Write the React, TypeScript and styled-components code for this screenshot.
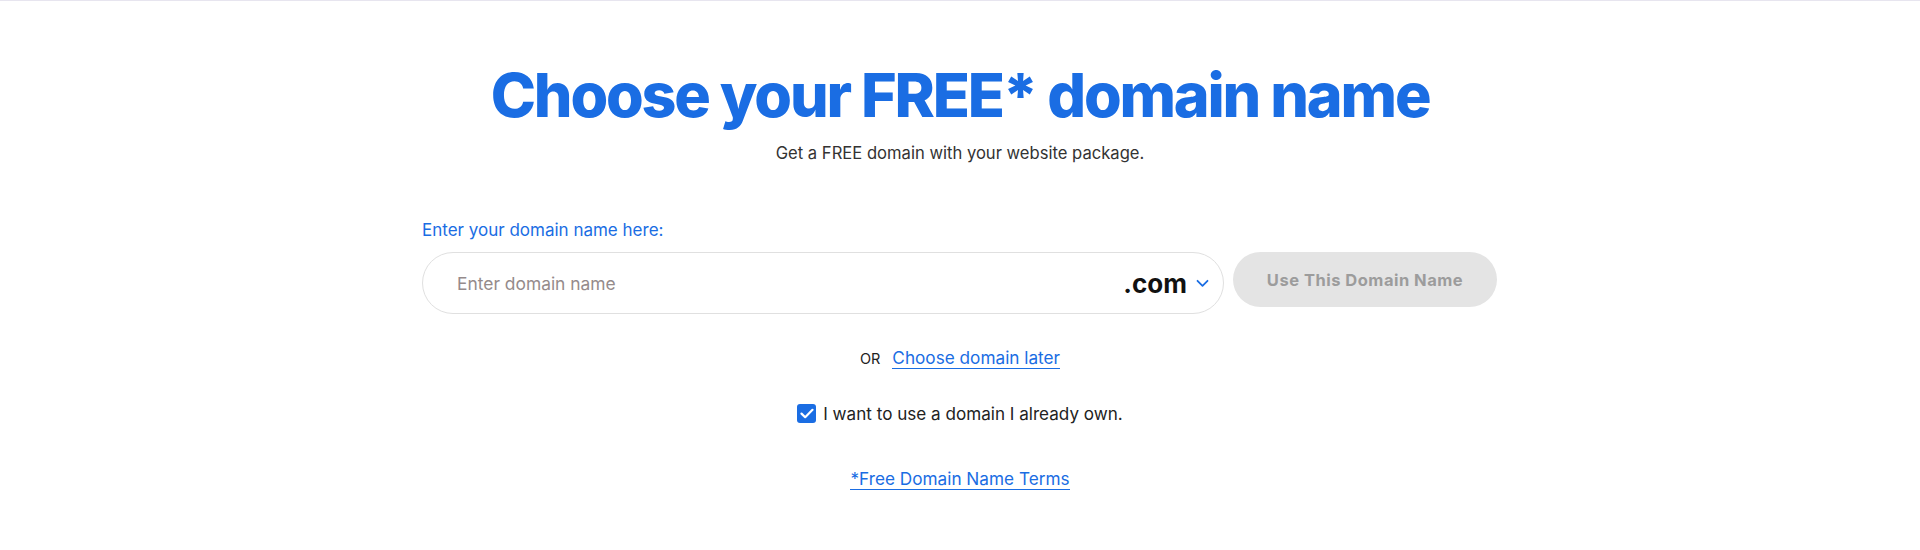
import styled, { createGlobalStyle } from "styled-components";

const GlobalStyle = createGlobalStyle`
  body {
    margin: 0;
    background: #ffffff;
    font-family: Inter, "Noto Sans", sans-serif;
    color: #222;
  }
`;

const blue = "#1a6de3";

const Page = styled.main`
  border-top: 1px solid #e7e5ef;
  display: flex;
  flex-direction: column;
  align-items: center;
  padding-top: 54px;
`;

const Title = styled.h1`
  margin: 0;
  font-size: 61px;
  font-weight: 800;
  letter-spacing: -2.2px;
  line-height: 80px;
  color: ${blue};
`;

const Subtitle = styled.p`
  margin: 8px 0 0;
  font-size: 16.6px;
  color: #333;
`;

const Form = styled.section`
  width: 1076px;
  margin-top: 57px;
`;

const Label = styled.label`
  display: block;
  font-size: 17px;
  color: ${blue};
  margin-bottom: 12px;
`;

const Row = styled.div`
  display: flex;
  align-items: flex-start;
  gap: 9px;
`;

const InputBox = styled.div`
  flex: 0 0 802px;
  box-sizing: border-box;
  height: 62px;
  border: 1px solid #e0e0e0;
  border-radius: 31px;
  display: flex;
  align-items: center;
  padding: 0 14px 0 32px;
`;

const Input = styled.input`
  flex: 1;
  border: none;
  outline: none;
  font-family: inherit;
  font-size: 17.4px;
  color: #333;
  background: transparent;
  &::placeholder {
    color: #958b8b;
  }
`;

const Tld = styled.button`
  display: flex;
  align-items: center;
  gap: 9px;
  border: none;
  background: none;
  padding: 0;
  font-family: inherit;
  font-size: 26px;
  font-weight: 700;
  color: #111;
  cursor: pointer;
`;

const SubmitButton = styled.button`
  width: 264px;
  height: 55px;
  border: none;
  border-radius: 28px;
  background: #e4e4e4;
  color: #9c9c9c;
  font-family: inherit;
  font-size: 16.5px;
  font-weight: 700;
  letter-spacing: 0.5px;
`;

const OrLine = styled.div`
  margin-top: 33px;
  display: flex;
  align-items: center;
  gap: 12px;
  font-size: 14.5px;
  color: #222;
`;

const Link = styled.a`
  display: inline-block;
  color: ${blue};
  font-size: 17.2px;
  text-decoration: none;
  border-bottom: 1px solid ${blue};
  line-height: 21px;
  cursor: pointer;
`;

const CheckRow = styled.label`
  margin-top: 34px;
  display: flex;
  align-items: center;
  gap: 7px;
  font-size: 17.1px;
  color: #222;
`;

const Box = styled.span`
  width: 19px;
  height: 19px;
  border-radius: 3px;
  background: ${blue};
  display: flex;
  align-items: center;
  justify-content: center;
`;

const Terms = styled.div`
  margin-top: 44px;
`;

export default function App() {
  return (
    <>
      <GlobalStyle />
      <Page>
        <Title>Choose your FREE* domain name</Title>
        <Subtitle>Get a FREE domain with your website package.</Subtitle>
        <Form>
          <Label htmlFor="domain">Enter your domain name here:</Label>
          <Row>
            <InputBox>
              <Input id="domain" placeholder="Enter domain name" />
              <Tld>
                .com
                <svg width="13" height="9" viewBox="0 0 13 9" fill="none">
                  <path d="M1.5 1.8 6.5 6.8l5-5" stroke={blue} strokeWidth="1.8" strokeLinecap="round" strokeLinejoin="round" />
                </svg>
              </Tld>
            </InputBox>
            <SubmitButton disabled>Use This Domain Name</SubmitButton>
          </Row>
        </Form>
        <OrLine>
          OR
          <Link>Choose domain later</Link>
        </OrLine>
        <CheckRow>
          <Box>
            <svg width="14" height="11" viewBox="0 0 14 11" fill="none">
              <path d="M1.5 5.6 5.2 9.2 12.5 1.8" stroke="#fff" strokeWidth="2.2" strokeLinecap="round" strokeLinejoin="round" />
            </svg>
          </Box>
          I want to use a domain I already own.
        </CheckRow>
        <Terms>
          <Link>*Free Domain Name Terms</Link>
        </Terms>
      </Page>
    </>
  );
}
